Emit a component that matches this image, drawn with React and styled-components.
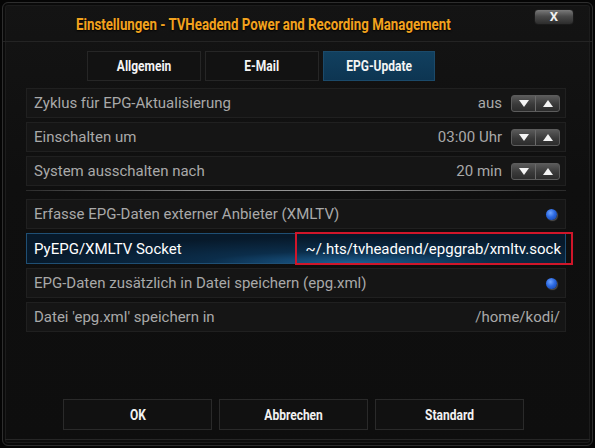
import React from "react";
import styled, { createGlobalStyle, css } from "styled-components";

const GlobalStyle = createGlobalStyle`
  html, body {
    margin: 0;
    padding: 0;
    background: #050505;
    font-family: Roboto, "Noto Sans", "Liberation Sans", sans-serif;
  }
  * { box-sizing: border-box; }
`;

// Outer dialog frame
const Dialog = styled.div`
  width: 591px;
  height: 444px;
  margin: 2px;
  border: 1px solid #2e2e2e;
  border-radius: 6px;
  background: linear-gradient(180deg, #141414 0%, #0f0f0f 40%, #0e0e0e 100%);
  box-shadow: inset 0 0 0 2px #0a0a0a, inset 0 0 0 3px #1c1c1c;
  display: flex;
  flex-direction: column;
  overflow: hidden;
`;

const Header = styled.div`
  height: 39px;
  display: grid;
  grid-template-columns: minmax(0, 1fr) auto;
  align-items: center;
  padding: 0 18px 0 73px;
  border-bottom: 1px solid #242424;
`;

const Condensed = styled.span`
  display: inline-block;
  transform: scaleX(${(p) => p.$sx || 0.8});
  transform-origin: ${(p) => p.$origin || "center"};
  white-space: nowrap;
`;

const Title = styled.div`
  min-width: 0;
  color: #f2a21e;
  font-weight: 700;
  font-size: 17px;
  text-shadow: 0 1px 2px #000;
  margin-top: 3px;
`;

const CloseButton = styled.div`
  width: 40px;
  height: 16px;
  margin-top: -11px;
  border-radius: 4px;
  background: linear-gradient(180deg, #7a7a7a 0%, #4a4a4a 45%, #2c2c2c 100%);
  border: 1px solid #1a1a1a;
  color: #f0f0f0;
  font-weight: 700;
  font-size: 13px;
  line-height: 14px;
  text-align: center;
`;

const Tabs = styled.div`
  display: flex;
  gap: 4px;
  margin: 9px 0 0 84px;
`;

const Tab = styled.div`
  width: 114px;
  height: 30px;
  display: flex;
  align-items: center;
  justify-content: center;
  color: #f4f4f4;
  font-weight: 700;
  font-size: 15px;
  border: 1px solid #262626;
  background: #121212;
  ${(p) =>
    p.$active &&
    css`
      background: linear-gradient(180deg, #11405f 0%, #0d3552 100%);
      border-color: #1b4a6a;
      width: 112px;
    `}
`;

const List = styled.div`
  display: flex;
  flex-direction: column;
  gap: 4px;
  margin: 7px 0 0 23px;
  width: 540px;
`;

const Row = styled.div`
  height: 30px;
  display: flex;
  align-items: center;
  padding: 0 5px 0 7px;
  border: 1px solid #202020;
  background: #151515;
  color: #a9a9a9;
  font-size: 15px;
  ${(p) =>
    p.$selected &&
    css`
      height: 31px;
      color: #ffffff;
      border-color: #1f4f74;
      background: radial-gradient(ellipse 60% 90% at 60% 100%, #1c5f93 0%, #0b2d4a 45%, #07192a 100%);
    `}
`;

const Label = styled.div`
  flex: 1;
  white-space: nowrap;
`;

const Value = styled.div`
  white-space: nowrap;
  margin-right: ${(p) => p.$gap ?? 9}px;
`;

const Separator = styled.div`
  height: 1px;
  margin: 0 0 4px;
  background: linear-gradient(90deg, #2a2a2a 0%, #8a8a8a 30%, #9a9a9a 60%, #2a2a2a 100%);
`;

const Spinner = styled.div`
  display: flex;
  width: 49px;
  height: 17px;
  border: 1px solid #5c5c5c;
  border-radius: 3px;
  overflow: hidden;
  background: linear-gradient(180deg, #5a5a5a 0%, #3a3a3a 55%, #2c2c2c 100%);
`;

const SpinHalf = styled.div`
  flex: 1;
  display: flex;
  align-items: center;
  justify-content: center;
  & + & {
    border-left: 1px solid #6a6a6a;
  }
`;

const Triangle = styled.div`
  width: 0;
  height: 0;
  border-left: 5px solid transparent;
  border-right: 5px solid transparent;
  ${(p) =>
    p.$up
      ? css`border-bottom: 7px solid #f4f4f4;`
      : css`border-top: 7px solid #f4f4f4;`}
`;

const Radio = styled.div`
  width: 11px;
  height: 11px;
  border-radius: 50%;
  margin-right: 3px;
  background: radial-gradient(circle at 40% 35%, #6fa4ff 0%, #2b68e0 45%, #143e9a 100%);
  box-shadow: 1px 1px 1px rgba(150, 150, 150, 0.45);
`;

const Highlight = styled.div`
  align-self: stretch;
  width: 278px;
  display: flex;
  align-items: center;
  justify-content: flex-end;
  margin: -2px -13px -2px 0;
  padding: 0 10px 0 8px;
  border: 2px solid #d0162a;
  color: #ffffff;
  font-size: 15px;
  white-space: nowrap;
`;

const Footer = styled.div`
  margin-top: auto;
  margin-bottom: 9px;
  display: flex;
  gap: 7px;
  padding-left: 60px;
`;

const FooterButton = styled.div`
  width: 149px;
  height: 31px;
  display: flex;
  align-items: center;
  justify-content: center;
  border: 1px solid #2a2a2a;
  background: #111111;
  color: #f2f2f2;
  font-weight: 700;
  font-size: 15px;
`;

const BottomEdge = styled.div`
  height: 6px;
  border-top: 1px solid #262626;
  margin: 0 2px;
`;

const Spin = () => (
  <Spinner>
    <SpinHalf>
      <Triangle />
    </SpinHalf>
    <SpinHalf>
      <Triangle $up />
    </SpinHalf>
  </Spinner>
);

const spinRows = [
  ["Zyklus für EPG-Aktualisierung", "aus"],
  ["Einschalten um", "03:00 Uhr"],
  ["System ausschalten nach", "20 min"],
];

export default function App() {
  return (
    <>
      <GlobalStyle />
      <Dialog>
        <Header>
          <Title>
            <Condensed $sx={0.78} $origin="left">
              Einstellungen - TVHeadend Power and Recording Management
            </Condensed>
          </Title>
          <CloseButton>X</CloseButton>
        </Header>

        <Tabs>
          <Tab>
            <Condensed>Allgemein</Condensed>
          </Tab>
          <Tab>
            <Condensed>E-Mail</Condensed>
          </Tab>
          <Tab $active>
            <Condensed>EPG-Update</Condensed>
          </Tab>
        </Tabs>

        <List>
          {spinRows.map(([label, value]) => (
            <Row key={label}>
              <Label>{label}</Label>
              <Value>{value}</Value>
              <Spin />
            </Row>
          ))}
          <Separator />
          <Row>
            <Label>Erfasse EPG-Daten externer Anbieter (XMLTV)</Label>
            <Radio />
          </Row>
          <Row $selected>
            <Label>PyEPG/XMLTV Socket</Label>
            <Highlight>~/.hts/tvheadend/epggrab/xmltv.sock</Highlight>
          </Row>
          <Row>
            <Label>EPG-Daten zusätzlich in Datei speichern (epg.xml)</Label>
            <Radio />
          </Row>
          <Row>
            <Label>Datei 'epg.xml' speichern in</Label>
            <Value $gap={0}>/home/kodi/</Value>
          </Row>
        </List>

        <Footer>
          <FooterButton>
            <Condensed>OK</Condensed>
          </FooterButton>
          <FooterButton>
            <Condensed>Abbrechen</Condensed>
          </FooterButton>
          <FooterButton>
            <Condensed>Standard</Condensed>
          </FooterButton>
        </Footer>
        <BottomEdge />
      </Dialog>
    </>
  );
}
